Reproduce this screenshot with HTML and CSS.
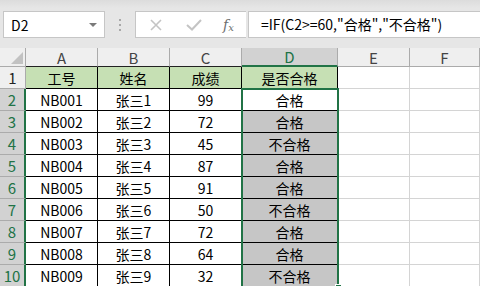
FILE: index.html
```html
<!DOCTYPE html>
<html lang="zh-CN">
<head>
    <meta charset="UTF-8">
    <title>成绩表</title>
    <link rel="stylesheet" href="styles.css">
</head>
<body>
    <div class="toolbar">
        <div class="namebox">
            <span>D2</span>
            <span class="caret"></span>
        </div>
        <div class="grip"><i></i><i></i><i></i></div>
        <div class="fnbox">
            <svg class="ico" width="14" height="14" viewBox="0 0 14 14">
                <path d="M2 2 L12 12 M12 2 L2 12" stroke="#c4c4c4" stroke-width="1.6" fill="none"/>
            </svg>
            <svg class="ico" width="16" height="12" viewBox="0 0 16 12">
                <path d="M1 6 L6 10.5 L15 1" stroke="#c4c4c4" stroke-width="2" fill="none"/>
            </svg>
            <span class="fx">f<sub>x</sub></span>
        </div>
        <div class="formula">=IF(C2&gt;=60,"合格","不合格")</div>
    </div>

    <div class="sheet">
        <div class="corner"></div>
        <div class="colhead dark">A</div>
        <div class="colhead dark">B</div>
        <div class="colhead dark">C</div>
        <div class="colhead active">D</div>
        <div class="colhead">E</div>
        <div class="colhead">F</div>

        <div class="rowhead">1</div>
        <div class="cell d title">工号</div>
        <div class="cell d title">姓名</div>
        <div class="cell d title">成绩</div>
        <div class="cell d title">是否合格</div>
        <div class="cell"></div>
        <div class="cell"></div>

        <div class="rowhead sel">2</div>
        <div class="cell d">NB001</div>
        <div class="cell d">张三1</div>
        <div class="cell d">99</div>
        <div class="cell d">合格</div>
        <div class="cell"></div>
        <div class="cell"></div>

        <div class="rowhead sel">3</div>
        <div class="cell d">NB002</div>
        <div class="cell d">张三2</div>
        <div class="cell d">72</div>
        <div class="cell d tint">合格</div>
        <div class="cell"></div>
        <div class="cell"></div>

        <div class="rowhead sel">4</div>
        <div class="cell d">NB003</div>
        <div class="cell d">张三3</div>
        <div class="cell d">45</div>
        <div class="cell d tint">不合格</div>
        <div class="cell"></div>
        <div class="cell"></div>

        <div class="rowhead sel">5</div>
        <div class="cell d">NB004</div>
        <div class="cell d">张三4</div>
        <div class="cell d">87</div>
        <div class="cell d tint">合格</div>
        <div class="cell"></div>
        <div class="cell"></div>

        <div class="rowhead sel">6</div>
        <div class="cell d">NB005</div>
        <div class="cell d">张三5</div>
        <div class="cell d">91</div>
        <div class="cell d tint">合格</div>
        <div class="cell"></div>
        <div class="cell"></div>

        <div class="rowhead sel">7</div>
        <div class="cell d">NB006</div>
        <div class="cell d">张三6</div>
        <div class="cell d">50</div>
        <div class="cell d tint">不合格</div>
        <div class="cell"></div>
        <div class="cell"></div>

        <div class="rowhead sel">8</div>
        <div class="cell d">NB007</div>
        <div class="cell d">张三7</div>
        <div class="cell d">72</div>
        <div class="cell d tint">合格</div>
        <div class="cell"></div>
        <div class="cell"></div>

        <div class="rowhead sel">9</div>
        <div class="cell d">NB008</div>
        <div class="cell d">张三8</div>
        <div class="cell d">64</div>
        <div class="cell d tint">合格</div>
        <div class="cell"></div>
        <div class="cell"></div>

        <div class="rowhead sel">10</div>
        <div class="cell d">NB009</div>
        <div class="cell d">张三9</div>
        <div class="cell d">32</div>
        <div class="cell d tint">不合格</div>
        <div class="cell"></div>
        <div class="cell"></div>

        <div class="selection"><span class="handle"></span></div>
    </div>
</body>
</html>
```

FILE: styles.css
```css
body {
    margin: 0;
    width: 480px;
    height: 286px;
    overflow: hidden;
    background-color: #fff;
    font-family: "Noto Sans CJK SC", sans-serif;
    font-size: 14px;
    color: #000;
}

.toolbar {
    height: 48px;
    box-sizing: border-box;
    padding-top: 11px;
    padding-left: 3px;
    display: flex;
    align-items: flex-start;
    background: linear-gradient(#dcdcdc, #e6e6e6 8px, #e6e6e6);
}

.namebox {
    width: 102px;
    height: 27px;
    box-sizing: border-box;
    border: 1px solid #c6c6c6;
    background-color: #fff;
    display: flex;
    align-items: center;
    justify-content: space-between;
    padding: 0 7px 0 7px;
    font-size: 14px;
}

.caret {
    width: 0;
    height: 0;
    border-left: 4px solid transparent;
    border-right: 4px solid transparent;
    border-top: 4px solid #7a7a7a;
}

.grip {
    width: 30px;
    height: 27px;
    display: flex;
    flex-direction: column;
    align-items: center;
    justify-content: center;
    gap: 3px;
}

.grip i {
    display: block;
    width: 2px;
    height: 2px;
    background-color: #a8a8a8;
}

.fnbox {
    width: 111px;
    height: 27px;
    box-sizing: border-box;
    border: 1px solid #c6c6c6;
    border-right: none;
    background-color: #fff;
    display: flex;
    align-items: center;
    padding-left: 13px;
    gap: 23px;
}

.fx {
    font-family: "DejaVu Serif", serif;
    font-style: italic;
    font-size: 14px;
    color: #6e6e6e;
    margin-left: -2px;
}

.fx sub {
    font-size: 10px;
    vertical-align: -1px;
}

.formula {
    flex: 1;
    height: 27px;
    box-sizing: border-box;
    border: 1px solid #c6c6c6;
    border-right: none;
    margin-left: 2px;
    background-color: #fff;
    padding-left: 12px;
    line-height: 25px;
    font-size: 14px;
    white-space: nowrap;
}

.sheet {
    position: relative;
    display: grid;
    grid-template-columns: 26px 72px 72px 72px 96px 72px 70px;
    grid-template-rows: 19px repeat(10, 22px);
}

.sheet > div {
    box-sizing: border-box;
    border-right: 1px solid #d4d4d4;
    border-bottom: 1px solid #d4d4d4;
    display: flex;
    align-items: center;
    justify-content: center;
    white-space: nowrap;
}

.corner {
    position: relative;
    background-color: #efefef;
    border-color: #ababab !important;
}

.corner::after {
    content: "";
    position: absolute;
    right: 2px;
    bottom: 2px;
    width: 0;
    height: 0;
    border-left: 12px solid transparent;
    border-bottom: 12px solid #c2c2c2;
}

.colhead {
    background-color: #efefef;
    color: #444;
    font-size: 15px;
    border-right-color: #ababab !important;
    border-bottom-color: #ababab !important;
}

.colhead.dark {
    border-bottom-color: #222 !important;
}

.colhead.active {
    background-color: #d2d2d2;
    color: #217346;
    border-bottom: 2px solid #217346 !important;
}

.rowhead {
    background-color: #efefef;
    color: #222;
    font-size: 15px;
    border-right-color: #ababab !important;
    border-bottom-color: #ababab !important;
}

.rowhead.sel {
    background-color: #d2d2d2;
    color: #217346;
    border-right: 2px solid #217346 !important;
}

.cell.d {
    border-right-color: #000;
    border-bottom-color: #000;
}

.cell.title {
    background-color: #c6e0b4;
}

.cell.tint {
    background-color: #c6c6c6;
}

.sheet > .selection {
    position: absolute;
    left: 241px;
    top: 40px;
    width: 98px;
    height: 200px;
    border: 2px solid #217346;
}

.handle {
    position: absolute;
    right: -5px;
    bottom: -5px;
    width: 5px;
    height: 5px;
    background-color: #217346;
    border: 1px solid #fff;
}
```
